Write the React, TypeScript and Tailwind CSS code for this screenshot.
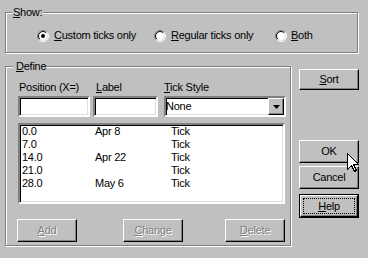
import React from "react";

const raised =
  "border border-t-white border-l-white border-r-black border-b-black shadow-[inset_-1px_-1px_0_#808080]";
const sunken =
  "border-2 border-t-[#808080] border-l-[#808080] border-r-white border-b-white shadow-[inset_1px_1px_0_#000,inset_-1px_-1px_0_#dfdfdf]";

function U({ children }: { children: React.ReactNode }) {
  return <span className="underline underline-offset-[1px] decoration-1">{children}</span>;
}

function GroupBox({
  label,
  className,
  children,
  labelLeft,
}: {
  label: React.ReactNode;
  className: string;
  children: React.ReactNode;
  labelLeft: string;
}) {
  return (
    <div
      className={
        "relative border border-[#808080] shadow-[inset_1px_1px_0_#fff,1px_1px_0_#fff] " + className
      }
    >
      <span className={"absolute top-[-7px] bg-[#c0c0c0] h-[13px] " + labelLeft}>{label}</span>
      {children}
    </div>
  );
}

function Radio({ checked }: { checked?: boolean }) {
  const r1 = 5.5;
  const r2 = 4.5;
  const k = Math.SQRT1_2;
  const pt = (r: number, a: number) => `${6 + r * k * a} ${6 - r * k * a}`;
  return (
    <svg width="12" height="12" viewBox="0 0 12 12" className="shrink-0">
      <circle cx="6" cy="6" r="5" fill="#fff" />
      <path d={`M ${pt(r1, -1)} A ${r1} ${r1} 0 0 1 ${pt(r1, 1)}`} stroke="#808080" fill="none" />
      <path d={`M ${pt(r1, 1)} A ${r1} ${r1} 0 0 1 ${pt(r1, -1)}`} stroke="#ffffff" fill="none" />
      <path d={`M ${pt(r2, -1)} A ${r2} ${r2} 0 0 1 ${pt(r2, 1)}`} stroke="#000" fill="none" />
      <path d={`M ${pt(r2, 1)} A ${r2} ${r2} 0 0 1 ${pt(r2, -1)}`} stroke="#dfdfdf" fill="none" />
      {checked && <circle cx="6" cy="6" r="2" fill="#000" />}
    </svg>
  );
}

function Button({
  children,
  className = "",
  disabled,
}: {
  children: React.ReactNode;
  className?: string;
  disabled?: boolean;
}) {
  return (
    <div
      className={
        "flex items-center justify-center bg-[#c0c0c0] " +
        raised +
        " " +
        (disabled ? "text-[#808080] [text-shadow:1px_1px_0_#fff] " : "") +
        className
      }
    >
      {children}
    </div>
  );
}

const rows: [string, string][] = [
  ["0.0", "Apr 8"],
  ["7.0", ""],
  ["14.0", "Apr 22"],
  ["21.0", ""],
  ["28.0", "May 6"],
];

export default function App() {
  return (
    <div className="relative w-[368px] h-[258px] overflow-hidden bg-[#c0c0c0] text-black text-[11px] leading-[13px] tracking-[-0.25px] [font-family:'Liberation_Sans',Arial,sans-serif] flex flex-col pt-[12px] pl-[5px]">
      <GroupBox
        className="w-[353px] h-[41px] shrink-0"
        labelLeft="left-[6px] px-[1px]"
        label={
          <>
            <U>S</U>how:
          </>
        }
      >
        <div className="flex items-center pt-[16px] pl-[31px] h-[29px]">
          <div className="flex items-center w-[117px]">
            <Radio checked />
            <span className="ml-[5px]">
              <U>C</U>ustom ticks only
            </span>
          </div>
          <div className="flex items-center w-[121px]">
            <Radio />
            <span className="ml-[5px]">
              <U>R</U>egular ticks only
            </span>
          </div>
          <div className="flex items-center">
            <Radio />
            <span className="ml-[4px]">
              <U>B</U>oth
            </span>
          </div>
        </div>
      </GroupBox>

      <div className="flex mt-[13px]">
        <GroupBox
          className="w-[286px] h-[180px] shrink-0"
          labelLeft="left-[7px] pl-[3px] pr-[1px]"
          label={
            <>
              <U>D</U>efine
            </>
          }
        >
          <div className="flex pl-[12px] pt-[14px]">
            <div className="flex flex-col w-[72px]">
              <span className="pl-[1px] h-[13px] whitespace-nowrap">Position (X=)</span>
              <div className={"mt-[2px] h-[21px] bg-white " + sunken} />
            </div>
            <div className="flex flex-col w-[65px] ml-[3px]">
              <span className="pl-[3px] h-[13px]">
                <U>L</U>abel
              </span>
              <div className={"mt-[2px] h-[21px] bg-white " + sunken} />
            </div>
            <div className="flex flex-col w-[122px] ml-[6px]">
              <span className="h-[13px]">
                <U>T</U>ick Style
              </span>
              <div className={"mt-[2px] h-[21px] bg-white flex items-stretch " + sunken}>
                <span className="flex-1 flex items-center">None</span>
                <div className={"w-[16px] flex items-center justify-center bg-[#c0c0c0] " + raised}>
                  <svg width="7" height="4" viewBox="0 0 7 4">
                    <path d="M0 0h7l-3.5 4z" fill="#000" />
                  </svg>
                </div>
              </div>
            </div>
          </div>

          <div className={"ml-[12px] mt-[6px] w-[267px] h-[81px] bg-white " + sunken}>
            {rows.map(([p, l]) => (
              <div key={p} className="flex h-[13px] pl-[2px]">
                <span className="w-[73px]">{p}</span>
                <span className="w-[76px]">{l}</span>
                <span>Tick</span>
              </div>
            ))}
          </div>

          <div className="flex pl-[11px] mt-[15px]">
            <Button disabled className="w-[60px] h-[23px]">
              <U>A</U>dd
            </Button>
            <Button disabled className="w-[60px] h-[23px] ml-[46px]">
              <U>C</U>hange
            </Button>
            <Button disabled className="w-[60px] h-[23px] ml-[42px]">
              <U>D</U>elete
            </Button>
          </div>
        </GroupBox>

        <div className="flex flex-col ml-[8px] pt-[3px]">
          <Button className="w-[60px] h-[21px]">
            <U>S</U>ort
          </Button>
          <Button className="w-[60px] h-[23px] mt-[50px]">OK</Button>
          <Button className="w-[60px] h-[23px] mt-[3px]">Cancel</Button>
          <div className="w-[60px] h-[24px] mt-[5px] border border-black flex">
            <div
              className={
                "relative flex-1 flex items-center justify-center bg-[#c0c0c0] " + raised
              }
            >
              <div className="absolute inset-[2px] border border-dotted border-black" />
              <span>
                <U>H</U>elp
              </span>
            </div>
          </div>
        </div>
      </div>

      <svg
        className="absolute left-[347px] top-[153px]"
        width="13"
        height="20"
        viewBox="0 0 13 20"
      >
        <path
          d="M0.5 0.5 V16.5 L4.5 12.5 L7.5 18.5 L9.5 17.5 L6.5 11.5 H11.5 Z"
          fill="#fff"
          stroke="#000"
          strokeWidth="1"
          shapeRendering="crispEdges"
        />
      </svg>
    </div>
  );
}
